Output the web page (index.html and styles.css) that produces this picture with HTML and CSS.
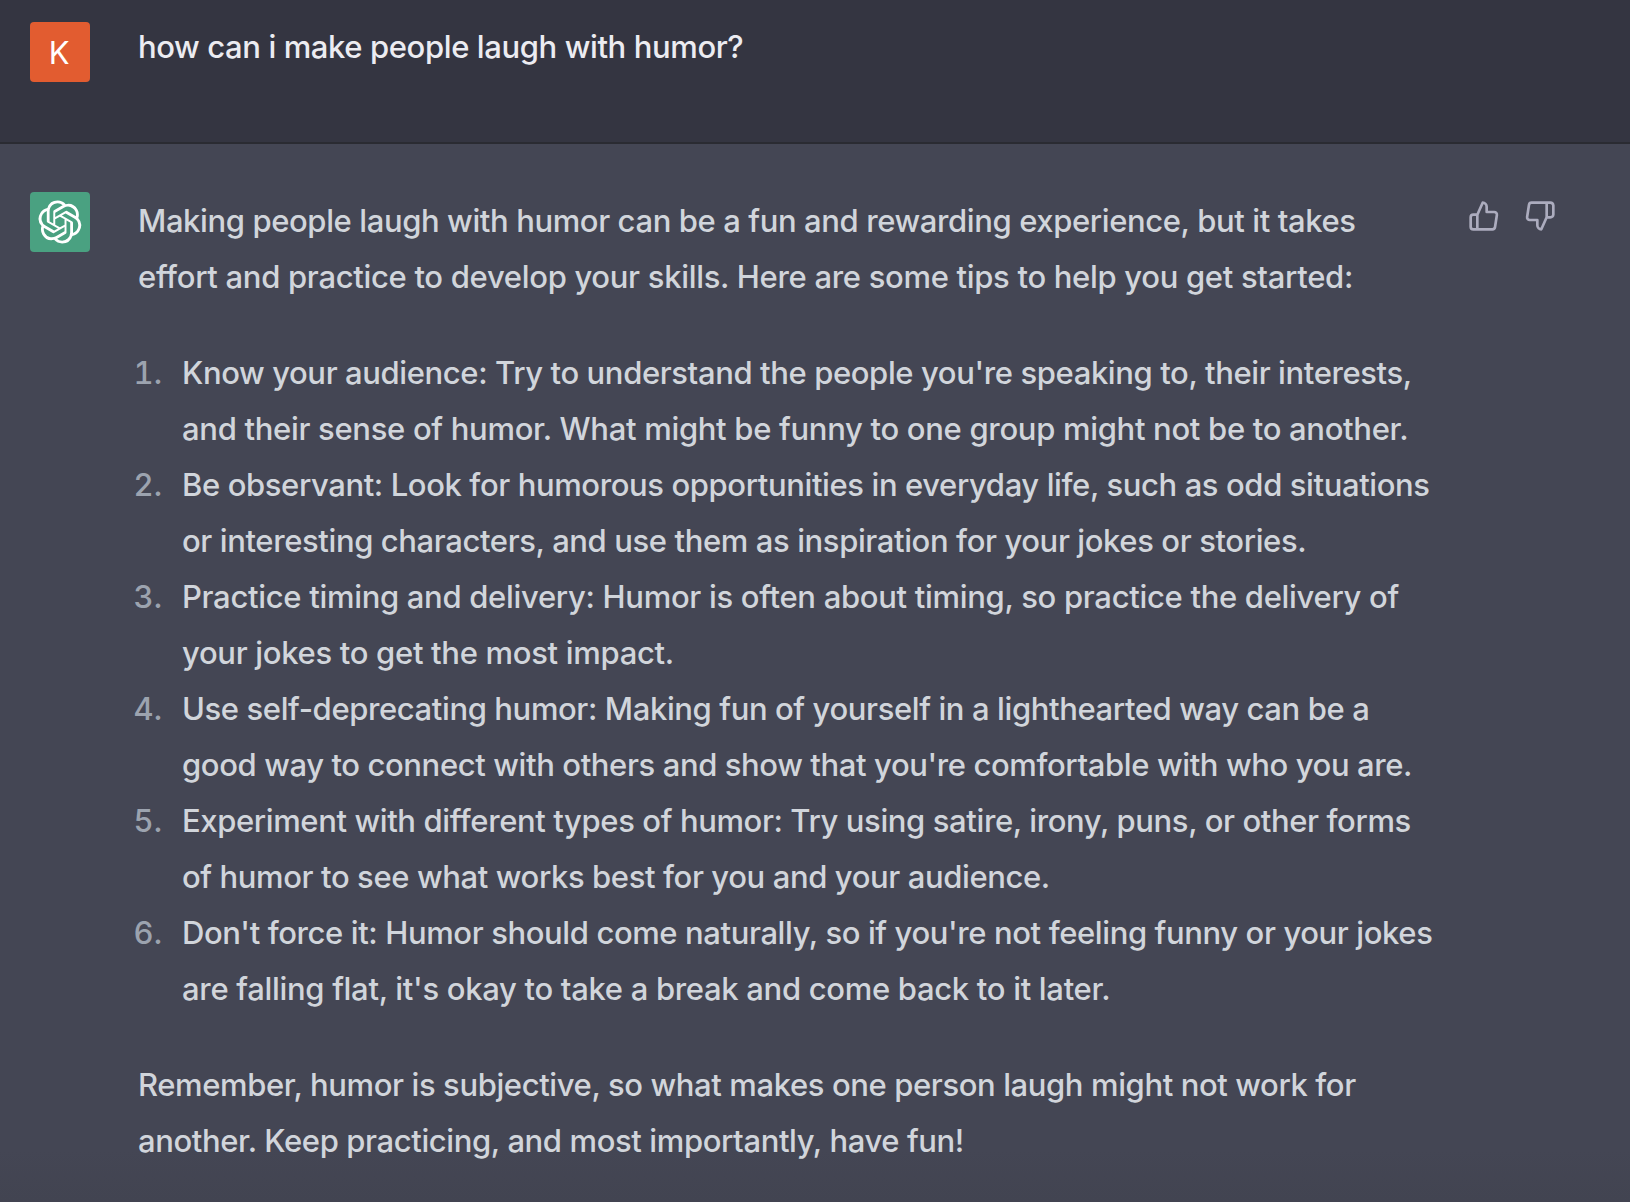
FILE: index.html
```html
<!DOCTYPE html>
<html lang="en">
<head>
  <meta charset="UTF-8">
  <meta name="viewport" content="width=device-width, initial-scale=1.0">
  <title>Chat</title>
  <link rel="stylesheet" href="styles.css">
</head>
<body>
  <div class="message user">
    <div class="avatar avatar-user">K</div>
    <div class="content">how can i make people laugh with humor?</div>
  </div>

  <div class="message assistant">
    <div class="avatar avatar-bot">
      <svg width="44" height="44" viewBox="0 0 41 41" fill="currentColor">
        <path d="M37.532 16.87a9.963 9.963 0 0 0-.856-8.184 10.078 10.078 0 0 0-10.855-4.835A9.964 9.964 0 0 0 18.306.5a10.079 10.079 0 0 0-9.614 6.977 9.967 9.967 0 0 0-6.664 4.834 10.08 10.08 0 0 0 1.24 11.817 9.965 9.965 0 0 0 .856 8.185 10.079 10.079 0 0 0 10.855 4.835 9.965 9.965 0 0 0 7.516 3.35 10.078 10.078 0 0 0 9.617-6.981 9.967 9.967 0 0 0 6.663-4.834 10.079 10.079 0 0 0-1.243-11.813ZM22.498 37.886a7.474 7.474 0 0 1-4.799-1.735c.061-.033.168-.091.237-.134l7.964-4.6a1.294 1.294 0 0 0 .655-1.134V19.054l3.366 1.944a.12.12 0 0 1 .066.092v9.299a7.505 7.505 0 0 1-7.49 7.496ZM6.392 31.006a7.471 7.471 0 0 1-.894-5.023c.06.036.162.099.237.141l7.964 4.6a1.297 1.297 0 0 0 1.308 0l9.724-5.614v3.888a.12.12 0 0 1-.048.103l-8.051 4.649a7.504 7.504 0 0 1-10.24-2.744ZM4.297 13.62A7.469 7.469 0 0 1 8.2 10.333c0 .068-.004.19-.004.274v9.201a1.294 1.294 0 0 0 .654 1.132l9.723 5.614-3.366 1.944a.12.12 0 0 1-.114.01L7.04 23.856a7.504 7.504 0 0 1-2.743-10.237Zm27.658 6.437-9.724-5.615 3.367-1.943a.121.121 0 0 1 .113-.01l8.052 4.648a7.498 7.498 0 0 1-1.158 13.528v-9.476a1.293 1.293 0 0 0-.65-1.132Zm3.35-5.043c-.059-.037-.162-.099-.236-.141l-7.965-4.6a1.298 1.298 0 0 0-1.308 0l-9.723 5.614v-3.888a.12.12 0 0 1 .048-.103l8.05-4.645a7.497 7.497 0 0 1 11.135 7.763Zm-21.063 6.929-3.367-1.944a.12.12 0 0 1-.065-.092v-9.299a7.497 7.497 0 0 1 12.293-5.756 6.94 6.94 0 0 0-.236.134l-7.965 4.6a1.294 1.294 0 0 0-.654 1.132l-.006 11.225Zm1.829-3.943 4.33-2.501 4.332 2.5v5l-4.331 2.5-4.331-2.5V18Z"/>
      </svg>
    </div>
    <div class="content">
      <p>Making people laugh with humor can be a fun and rewarding experience, but it takes<br><span class="loose">effort and practice to develop your skills. Here are some tips to help you get started:</span></p>
      <ol>
        <li>Know your audience: Try to understand the people you're speaking to, their interests,<br><span class="loose">and their sense of humor. What might be funny to one group might not be to another.</span></li>
        <li>Be observant: Look for humorous opportunities in everyday life, such as odd situations<br>or interesting characters, and use them as inspiration for your jokes or stories.</li>
        <li><span class="loose">Practice timing and delivery: Humor is often about timing, so practice the delivery of</span><br><span class="loose">your jokes to get the most impact.</span></li>
        <li>Use self-deprecating humor: Making fun of yourself in a lighthearted way can be a<br>good way to connect with others and show that you're comfortable with who you are.</li>
        <li>Experiment with different types of humor: Try using satire, irony, puns, or other forms<br>of humor to see what works best for you and your audience.</li>
        <li>Don't force it: Humor should come naturally, so if you're not feeling funny or your jokes<br><span class="loose">are falling flat, it's okay to take a break and come back to it later.</span></li>
      </ol>
      <p>Remember, humor is subjective, so what makes one person laugh might not work for<br>another. Keep practicing, and most importantly, have fun!</p>
    </div>
    <div class="feedback">
      <svg viewBox="0 0 24 24">
        <path d="M14 9V5a3 3 0 0 0-3-3l-4 9v11h11.28a2 2 0 0 0 2-1.7l1.38-9a2 2 0 0 0-2-2.3zM7 22H4a2 2 0 0 1-2-2v-7a2 2 0 0 1 2-2h3"/>
      </svg>
      <svg viewBox="0 0 24 24">
        <path d="M10 15v4a3 3 0 0 0 3 3l4-9V2H5.72a2 2 0 0 0-2 1.7l-1.38 9a2 2 0 0 0 2 2.3zm7-13h2.67A2.31 2.31 0 0 1 22 4v7a2.31 2.31 0 0 1-2.33 2H17"/>
      </svg>
    </div>
  </div>
</body>
</html>
```
FILE: styles.css
```css
* {
  box-sizing: border-box;
}
body {
  margin: 0;
  height: 100vh;
  overflow: hidden;
  display: flex;
  flex-direction: column;
  background-color: #444654;
  font-family: Inter, "Liberation Sans", sans-serif;
  font-size: 31px;
  font-weight: 450;
  letter-spacing: -0.39px;
}
.message {
  display: flex;
  padding-left: 30px;
}
.user {
  height: 144px;
  padding-top: 22px;
  background-color: #343541;
  border-bottom: 2px solid #2a2b32;
  color: #ececf1;
  line-height: 48px;
}
.assistant {
  flex: 1;
  padding-top: 48px;
  background: linear-gradient(#444654 95%, #424451);
  color: #d1d5db;
  line-height: 56px;
}
.avatar {
  display: flex;
  flex-shrink: 0;
  align-items: center;
  justify-content: center;
  width: 60px;
  height: 60px;
  margin-right: 48px;
  border-radius: 4px;
  color: #fff;
}
.avatar-user {
  padding: 2px 2px 0 0;
  background-color: #e25c30;
  font-weight: 400;
}
.avatar-bot {
  background-color: #4aa181;
}
.content {
  padding-top: 1px;
  white-space: nowrap;
}
.assistant .content {
  width: 1330px;
}
.loose {
  letter-spacing: -0.31px;
}
p {
  margin: 0;
}
ol {
  margin: 40px 0;
  padding-left: 44px;
  list-style: none;
  counter-reset: item;
}
li {
  counter-increment: item;
}
li::before {
  content: counter(item) ".";
  display: inline-block;
  width: 40px;
  margin-left: -60px;
  margin-right: 20px;
  text-align: right;
  letter-spacing: 0;
  color: #9ca3af;
  font-variant-numeric: tabular-nums;
}
.feedback {
  display: flex;
  gap: 24px;
  padding-top: 8px;
}
.feedback svg {
  width: 32px;
  height: 32px;
  fill: none;
  stroke: #acacbe;
  stroke-width: 2;
  stroke-linecap: round;
  stroke-linejoin: round;
}
```
